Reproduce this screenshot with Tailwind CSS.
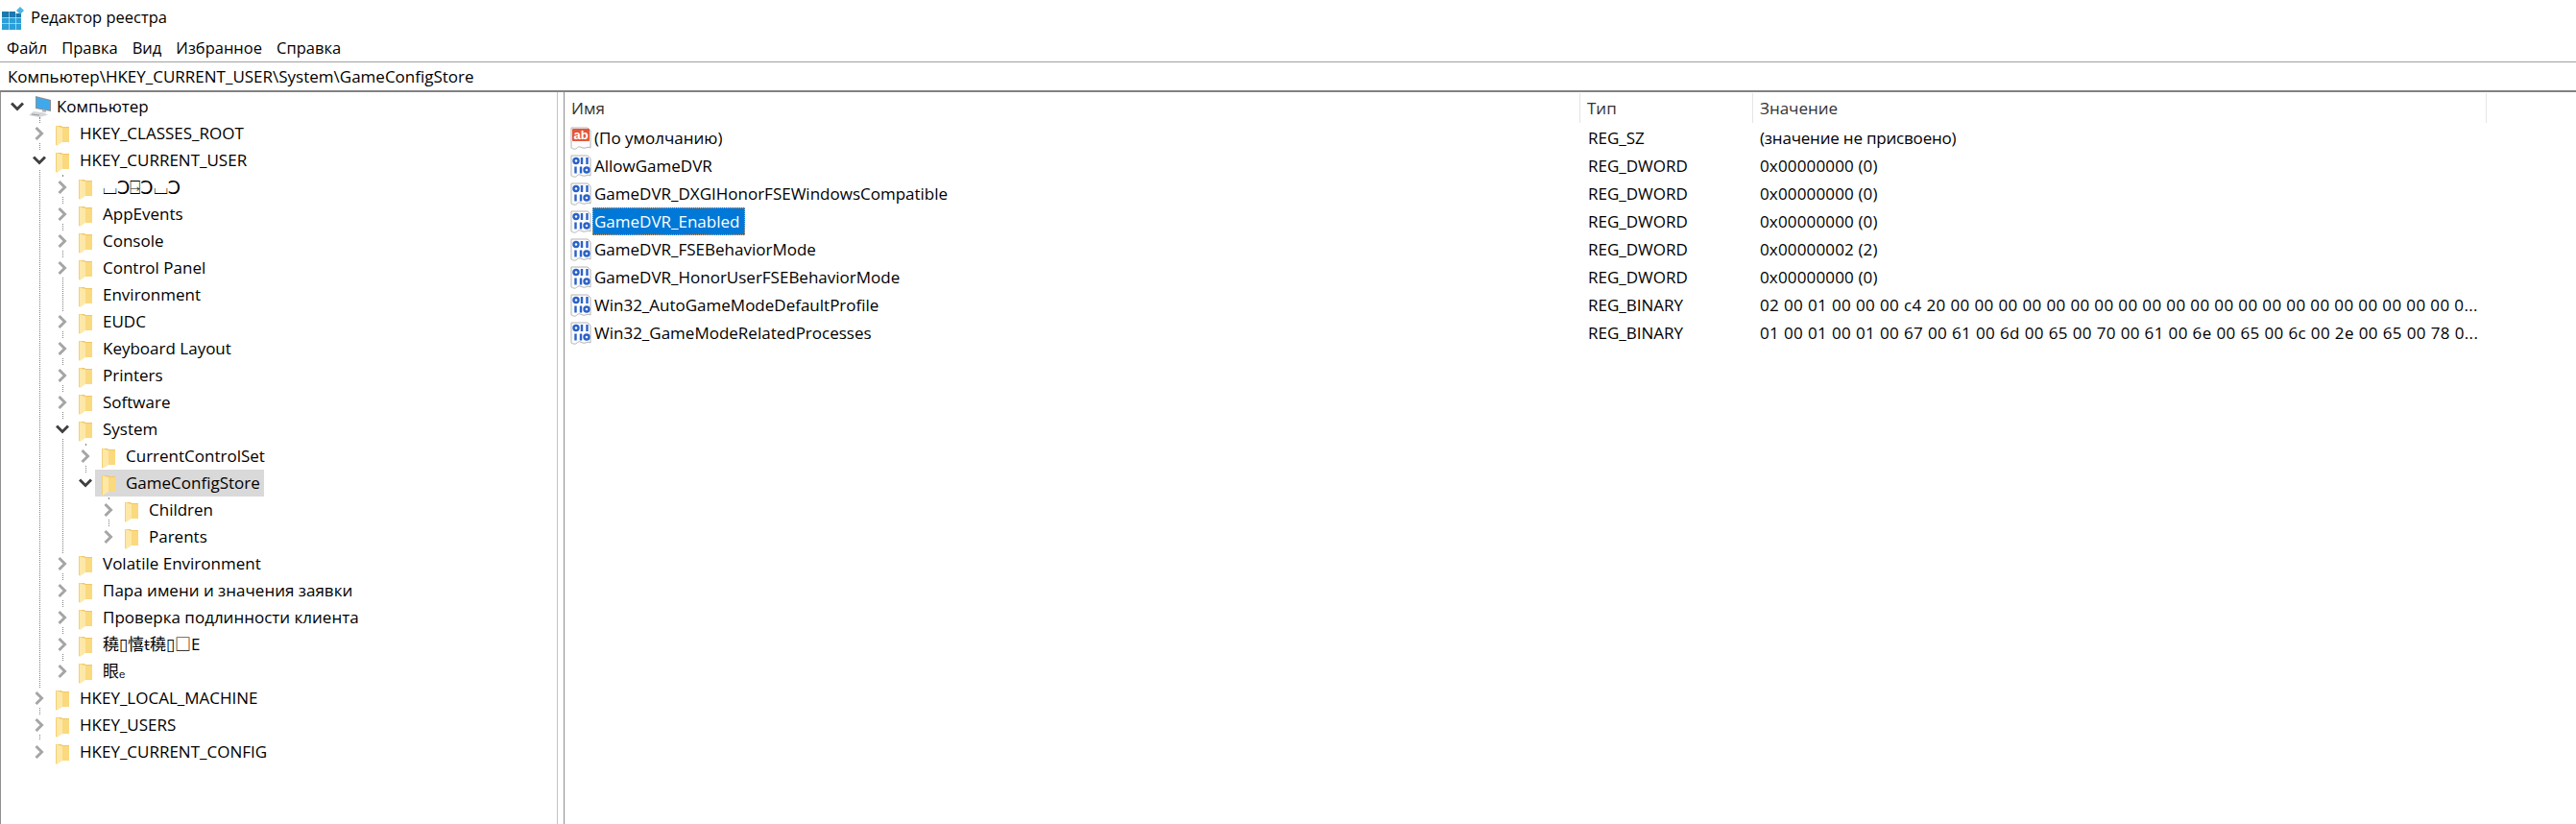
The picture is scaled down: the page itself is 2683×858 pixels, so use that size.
<!DOCTYPE html>
<html lang="ru">
<head>
  <meta charset="UTF-8" />
  <title>Редактор реестра</title>
  <script src="https://cdn.jsdelivr.net/npm/@tailwindcss/browser@4"></script>
</head>
<body class="w-[2683px] h-[858px] overflow-hidden bg-white text-[#000] text-[17px] font-['Open_Sans','Noto_Sans_CJK_SC',sans-serif] flex flex-col">

  <!-- shared icons -->
  <svg class="hidden">
    <symbol id="folder" viewBox="0 0 16 22">
      <path d="M2 1h5l1 1h7v16H2z" fill="#f2c766"/>
      <path d="M8 3h7v15H8z" fill="#fad97f"/>
      <path d="M1 1l7 2v15l-6 4-1-1z" fill="#fde8a8"/>
      <path d="M1 1l1 0v20l-1 0z" fill="#f4d078"/>
    </symbol>
    <symbol id="closed" viewBox="0 0 12 16">
      <path d="M2.5 2l6 6-6 6" fill="none" stroke="#a6a6a6" stroke-width="3"/>
    </symbol>
    <symbol id="open" viewBox="0 0 14 10">
      <path d="M1 1.5l6 6 6-6" fill="none" stroke="#404040" stroke-width="3"/>
    </symbol>
    <symbol id="bin" viewBox="0 0 24 24">
      <path d="M2 1h17l3 3v18c-3-2-5 1-8 0s-4-2-6 0-4 1-6 0z" fill="#fdfdfd" stroke="#b4b4b4"/>
      <g fill="none" stroke="#2b62c8" stroke-width="2.400">
        <circle cx="7" cy="6.500" r="2.500"/>
        <path d="M13 3v7M18.500 3v7M6.500 12.500v7M12 12.500v7"/>
        <circle cx="18" cy="16" r="2.500"/>
      </g>
    </symbol>
    <symbol id="ab" viewBox="0 0 24 24">
      <path d="M2 1h17l3 3v18c-3-2-5 1-8 0s-4-2-6 0-4 1-6 0z" fill="#fdfdfd" stroke="#b4b4b4"/>
      <rect x="3" y="2" width="18" height="13" rx="1" fill="#e2573c"/>
      <text x="12" y="13" text-anchor="middle" font-family="Liberation Sans" font-weight="700" font-size="13" fill="#fff">ab</text>
    </symbol>
  </svg>

  <!-- title bar -->
  <div class="h-9 flex items-center pl-0.5">
    <svg width="24" height="24" viewBox="0 0 24 24" class="mt-0.5">
      <path d="M0 5h7v6H0zM7.500 5H14v6H7.500z" fill="#1c78ad"/>
      <path d="M14.500 7H20v4h-5.500z" fill="#1c78ad"/>
      <path d="M0 11.500h7v6H0zM7.500 11.500H14v6H7.500zM14.500 11.500H20v6h-5.500zM0 18h7v6H0zM7.500 18H14v6H7.500zM14.500 18H20v6h-5.500z" fill="#2a9fd8"/>
      <path d="M19 0l4 4-4 4-4-4z" fill="#4fb4e4"/>
    </svg>
    <span class="ml-1.5 text-[16.5px]">Редактор реестра</span>
  </div>

  <!-- menu -->
  <div class="h-7 flex items-center pl-[7px] gap-[15px] text-[16.5px]">
    <span>Файл</span>
    <span>Правка</span>
    <span>Вид</span>
    <span>Избранное</span>
    <span>Справка</span>
  </div>

  <!-- address bar -->
  <div class="h-8 flex items-center pl-2 border-t border-[#a0a0a0] border-b-2 border-b-[#828282]">Компьютер\HKEY_CURRENT_USER\System\GameConfigStore</div>

  <div class="flex-1 flex min-h-0">
    <!-- tree -->
    <div class="relative w-[581px] pt-px border-l border-[#8f8f8f] border-r border-r-[#c4c4c4] text-[#000]">
      <div class="absolute left-[40px] top-[26px] h-[648px] border-l border-dotted border-[#808080]"></div>
      <div class="absolute left-[64px] top-[86px] h-[518px] border-l border-dotted border-[#808080]"></div>
      <div class="absolute left-[88px] top-[366px] h-[42px] border-l border-dotted border-[#808080]"></div>
      <div class="absolute left-[112px] top-[422px] h-[42px] border-l border-dotted border-[#808080]"></div>

      <div class="h-7 flex items-center pl-[7px]">
        <span class="relative z-10 w-[20px] h-5 bg-white flex items-center justify-center"><svg width="14" height="10"><use href="#open"/></svg></span>
        <svg width="24" height="22" viewBox="0 0 24 22" class="ml-[2px]">
          <path d="M7 0l16 4v12L7 13z" fill="#8a8f96"/>
          <path d="M8 1.500l14 3.500v9.500L8 12z" fill="#3eaaec"/>
          <path d="M14 14l4 .8v2l-4-.6z" fill="#a9adb2"/>
          <path d="M5 16l11 1.500 4 2-9 2.500-11-2z" fill="#d4d6d9"/>
          <path d="M3 19l8 1" stroke="#9a9a9a" fill="none"/>
        </svg>
        <span class="ml-[5px]">Компьютер</span>
      </div>

      <div class="h-7 flex items-center pl-[30px]">
        <span class="relative z-10 w-[20px] h-5 bg-white flex items-center justify-center"><svg width="12" height="16"><use href="#closed"/></svg></span>
        <svg width="16" height="22" class="ml-[6px] mt-1"><use href="#folder"/></svg>
        <span class="ml-[10px]">HKEY_CLASSES_ROOT</span>
      </div>
      <div class="h-7 flex items-center pl-[30px]">
        <span class="relative z-10 w-[20px] h-5 bg-white flex items-center justify-center"><svg width="14" height="10"><use href="#open"/></svg></span>
        <svg width="16" height="22" class="ml-[6px] mt-1"><use href="#folder"/></svg>
        <span class="ml-[10px]">HKEY_CURRENT_USER</span>
      </div>

      <div class="h-7 flex items-center pl-[54px]">
        <span class="relative z-10 w-[20px] h-5 bg-white flex items-center justify-center"><svg width="12" height="16"><use href="#closed"/></svg></span>
        <svg width="16" height="22" class="ml-[6px] mt-1"><use href="#folder"/></svg>
        <span class="ml-[10px] font-['DejaVu_Sans'] text-[19px]">⌴Ↄ⍈Ↄ⌴Ↄ</span>
      </div>
      <div class="h-7 flex items-center pl-[54px]">
        <span class="relative z-10 w-[20px] h-5 bg-white flex items-center justify-center"><svg width="12" height="16"><use href="#closed"/></svg></span>
        <svg width="16" height="22" class="ml-[6px] mt-1"><use href="#folder"/></svg>
        <span class="ml-[10px]">AppEvents</span>
      </div>
      <div class="h-7 flex items-center pl-[54px]">
        <span class="relative z-10 w-[20px] h-5 bg-white flex items-center justify-center"><svg width="12" height="16"><use href="#closed"/></svg></span>
        <svg width="16" height="22" class="ml-[6px] mt-1"><use href="#folder"/></svg>
        <span class="ml-[10px]">Console</span>
      </div>
      <div class="h-7 flex items-center pl-[54px]">
        <span class="relative z-10 w-[20px] h-5 bg-white flex items-center justify-center"><svg width="12" height="16"><use href="#closed"/></svg></span>
        <svg width="16" height="22" class="ml-[6px] mt-1"><use href="#folder"/></svg>
        <span class="ml-[10px]">Control Panel</span>
      </div>
      <div class="h-7 flex items-center pl-[54px]">
        <span class="w-[20px] h-5"></span>
        <svg width="16" height="22" class="ml-[6px] mt-1"><use href="#folder"/></svg>
        <span class="ml-[10px]">Environment</span>
      </div>
      <div class="h-7 flex items-center pl-[54px]">
        <span class="relative z-10 w-[20px] h-5 bg-white flex items-center justify-center"><svg width="12" height="16"><use href="#closed"/></svg></span>
        <svg width="16" height="22" class="ml-[6px] mt-1"><use href="#folder"/></svg>
        <span class="ml-[10px]">EUDC</span>
      </div>
      <div class="h-7 flex items-center pl-[54px]">
        <span class="relative z-10 w-[20px] h-5 bg-white flex items-center justify-center"><svg width="12" height="16"><use href="#closed"/></svg></span>
        <svg width="16" height="22" class="ml-[6px] mt-1"><use href="#folder"/></svg>
        <span class="ml-[10px]">Keyboard Layout</span>
      </div>
      <div class="h-7 flex items-center pl-[54px]">
        <span class="relative z-10 w-[20px] h-5 bg-white flex items-center justify-center"><svg width="12" height="16"><use href="#closed"/></svg></span>
        <svg width="16" height="22" class="ml-[6px] mt-1"><use href="#folder"/></svg>
        <span class="ml-[10px]">Printers</span>
      </div>
      <div class="h-7 flex items-center pl-[54px]">
        <span class="relative z-10 w-[20px] h-5 bg-white flex items-center justify-center"><svg width="12" height="16"><use href="#closed"/></svg></span>
        <svg width="16" height="22" class="ml-[6px] mt-1"><use href="#folder"/></svg>
        <span class="ml-[10px]">Software</span>
      </div>
      <div class="h-7 flex items-center pl-[54px]">
        <span class="relative z-10 w-[20px] h-5 bg-white flex items-center justify-center"><svg width="14" height="10"><use href="#open"/></svg></span>
        <svg width="16" height="22" class="ml-[6px] mt-1"><use href="#folder"/></svg>
        <span class="ml-[10px]">System</span>
      </div>

      <div class="h-7 flex items-center pl-[78px]">
        <span class="relative z-10 w-[20px] h-5 bg-white flex items-center justify-center"><svg width="12" height="16"><use href="#closed"/></svg></span>
        <svg width="16" height="22" class="ml-[6px] mt-1"><use href="#folder"/></svg>
        <span class="ml-[10px]">CurrentControlSet</span>
      </div>
      <div class="h-7 flex items-center pl-[78px]">
        <span class="relative z-10 w-[20px] h-5 bg-white flex items-center justify-center"><svg width="14" height="10"><use href="#open"/></svg></span>
        <div class="flex items-center h-7 bg-[#d9d9d9] pl-[6px] pr-1">
          <svg width="16" height="22" class="mt-1"><use href="#folder"/></svg>
          <span class="ml-[10px]">GameConfigStore</span>
        </div>
      </div>
      <div class="h-7 flex items-center pl-[102px]">
        <span class="relative z-10 w-[20px] h-5 bg-white flex items-center justify-center"><svg width="12" height="16"><use href="#closed"/></svg></span>
        <svg width="16" height="22" class="ml-[6px] mt-1"><use href="#folder"/></svg>
        <span class="ml-[10px]">Children</span>
      </div>
      <div class="h-7 flex items-center pl-[102px]">
        <span class="relative z-10 w-[20px] h-5 bg-white flex items-center justify-center"><svg width="12" height="16"><use href="#closed"/></svg></span>
        <svg width="16" height="22" class="ml-[6px] mt-1"><use href="#folder"/></svg>
        <span class="ml-[10px]">Parents</span>
      </div>

      <div class="h-7 flex items-center pl-[54px]">
        <span class="relative z-10 w-[20px] h-5 bg-white flex items-center justify-center"><svg width="12" height="16"><use href="#closed"/></svg></span>
        <svg width="16" height="22" class="ml-[6px] mt-1"><use href="#folder"/></svg>
        <span class="ml-[10px]">Volatile Environment</span>
      </div>
      <div class="h-7 flex items-center pl-[54px]">
        <span class="relative z-10 w-[20px] h-5 bg-white flex items-center justify-center"><svg width="12" height="16"><use href="#closed"/></svg></span>
        <svg width="16" height="22" class="ml-[6px] mt-1"><use href="#folder"/></svg>
        <span class="ml-[10px]">Пара имени и значения заявки</span>
      </div>
      <div class="h-7 flex items-center pl-[54px]">
        <span class="relative z-10 w-[20px] h-5 bg-white flex items-center justify-center"><svg width="12" height="16"><use href="#closed"/></svg></span>
        <svg width="16" height="22" class="ml-[6px] mt-1"><use href="#folder"/></svg>
        <span class="ml-[10px]">Проверка подлинности клиента</span>
      </div>
      <div class="h-7 flex items-center pl-[54px]">
        <span class="relative z-10 w-[20px] h-5 bg-white flex items-center justify-center"><svg width="12" height="16"><use href="#closed"/></svg></span>
        <svg width="16" height="22" class="ml-[6px] mt-1"><use href="#folder"/></svg>
        <span class="ml-[10px]">穘▯憘ŧ穘▯□E</span>
      </div>
      <div class="h-7 flex items-center pl-[54px]">
        <span class="relative z-10 w-[20px] h-5 bg-white flex items-center justify-center"><svg width="12" height="16"><use href="#closed"/></svg></span>
        <svg width="16" height="22" class="ml-[6px] mt-1"><use href="#folder"/></svg>
        <span class="ml-[10px]">眼ₑ</span>
      </div>

      <div class="h-7 flex items-center pl-[30px]">
        <span class="relative z-10 w-[20px] h-5 bg-white flex items-center justify-center"><svg width="12" height="16"><use href="#closed"/></svg></span>
        <svg width="16" height="22" class="ml-[6px] mt-1"><use href="#folder"/></svg>
        <span class="ml-[10px]">HKEY_LOCAL_MACHINE</span>
      </div>
      <div class="h-7 flex items-center pl-[30px]">
        <span class="relative z-10 w-[20px] h-5 bg-white flex items-center justify-center"><svg width="12" height="16"><use href="#closed"/></svg></span>
        <svg width="16" height="22" class="ml-[6px] mt-1"><use href="#folder"/></svg>
        <span class="ml-[10px]">HKEY_USERS</span>
      </div>
      <div class="h-7 flex items-center pl-[30px]">
        <span class="relative z-10 w-[20px] h-5 bg-white flex items-center justify-center"><svg width="12" height="16"><use href="#closed"/></svg></span>
        <svg width="16" height="22" class="ml-[6px] mt-1"><use href="#folder"/></svg>
        <span class="ml-[10px]">HKEY_CURRENT_CONFIG</span>
      </div>
    </div>

    <!-- values -->
    <div class="ml-[6px] flex-1 border-l border-[#8f8f8f]">
      <div class="h-[33px] flex pt-px text-[#333]">
        <div class="w-[1058px] h-[31px] flex items-center pl-[7px] border-r border-[#e5e5e5]">Имя</div>
        <div class="w-[180px] h-[31px] flex items-center pl-[7px] border-r border-[#e5e5e5]">Тип</div>
        <div class="w-[764px] h-[31px] flex items-center pl-[7px] border-r border-[#e5e5e5]">Значение</div>
      </div>

      <div class="h-[29px] flex items-center">
        <div class="w-[1058px] flex items-center pl-[5px]"><svg width="24" height="24"><use href="#ab"/></svg><span class="ml-[2px]">(По умолчанию)</span></div>
        <div class="w-[180px] pl-[8px]">REG_SZ</div>
        <div class="pl-[7px] tracking-[-0.2px]">(значение не присвоено)</div>
      </div>
      <div class="h-[29px] flex items-center">
        <div class="w-[1058px] flex items-center pl-[5px]"><svg width="24" height="24"><use href="#bin"/></svg><span class="ml-[2px]">AllowGameDVR</span></div>
        <div class="w-[180px] pl-[8px]">REG_DWORD</div>
        <div class="pl-[7px] tracking-[0.15px]">0x00000000 (0)</div>
      </div>
      <div class="h-[29px] flex items-center">
        <div class="w-[1058px] flex items-center pl-[5px]"><svg width="24" height="24"><use href="#bin"/></svg><span class="ml-[2px]">GameDVR_DXGIHonorFSEWindowsCompatible</span></div>
        <div class="w-[180px] pl-[8px]">REG_DWORD</div>
        <div class="pl-[7px] tracking-[0.15px]">0x00000000 (0)</div>
      </div>
      <div class="h-[29px] flex items-center">
        <div class="w-[1058px] flex items-center pl-[5px]"><svg width="24" height="24"><use href="#bin"/></svg><span class="h-[29px] flex items-center pl-[2px] pr-[6px] bg-[#0078d7] text-white outline-1 outline-dotted -outline-offset-1 outline-[#e8a860]">GameDVR_Enabled</span></div>
        <div class="w-[180px] pl-[8px]">REG_DWORD</div>
        <div class="pl-[7px] tracking-[0.15px]">0x00000000 (0)</div>
      </div>
      <div class="h-[29px] flex items-center">
        <div class="w-[1058px] flex items-center pl-[5px]"><svg width="24" height="24"><use href="#bin"/></svg><span class="ml-[2px]">GameDVR_FSEBehaviorMode</span></div>
        <div class="w-[180px] pl-[8px]">REG_DWORD</div>
        <div class="pl-[7px] tracking-[0.15px]">0x00000002 (2)</div>
      </div>
      <div class="h-[29px] flex items-center">
        <div class="w-[1058px] flex items-center pl-[5px]"><svg width="24" height="24"><use href="#bin"/></svg><span class="ml-[2px]">GameDVR_HonorUserFSEBehaviorMode</span></div>
        <div class="w-[180px] pl-[8px]">REG_DWORD</div>
        <div class="pl-[7px] tracking-[0.15px]">0x00000000 (0)</div>
      </div>
      <div class="h-[29px] flex items-center">
        <div class="w-[1058px] flex items-center pl-[5px]"><svg width="24" height="24"><use href="#bin"/></svg><span class="ml-[2px]">Win32_AutoGameModeDefaultProfile</span></div>
        <div class="w-[180px] pl-[8px]">REG_BINARY</div>
        <div class="pl-[7px] tracking-[0.38px]">02 00 01 00 00 00 c4 20 00 00 00 00 00 00 00 00 00 00 00 00 00 00 00 00 00 00 00 00 00 0...</div>
      </div>
      <div class="h-[29px] flex items-center">
        <div class="w-[1058px] flex items-center pl-[5px]"><svg width="24" height="24"><use href="#bin"/></svg><span class="ml-[2px]">Win32_GameModeRelatedProcesses</span></div>
        <div class="w-[180px] pl-[8px]">REG_BINARY</div>
        <div class="pl-[7px] tracking-[0.38px]">01 00 01 00 01 00 67 00 61 00 6d 00 65 00 70 00 61 00 6e 00 65 00 6c 00 2e 00 65 00 78 0...</div>
      </div>
    </div>
  </div>
</body>
</html>
